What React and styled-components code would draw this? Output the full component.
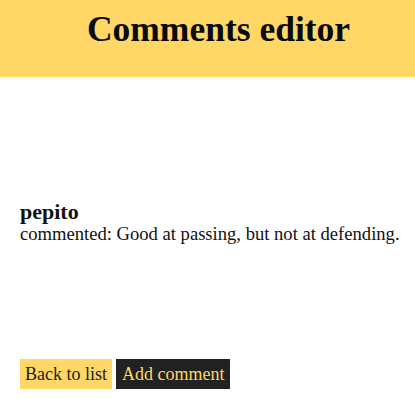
import styled, { createGlobalStyle } from "styled-components";

const GlobalStyle = createGlobalStyle`
  body {
    margin: 0;
    background: #ffffff;
    font-family: "Liberation Serif", "DejaVu Serif", serif;
    color: #111111;
  }
`;

const Header = styled.header`
  height: 77px;
  background-color: #fed766;
  display: flex;
  justify-content: center;
  padding-left: 22px;
`;

const Title = styled.h1`
  margin: 0;
  padding-top: 9px;
  font-size: 35.5px;
  font-weight: 700;
  line-height: 40px;
  color: #0a0a0a;
`;

const Main = styled.main`
  padding: 124px 0 0 20px;
`;

const Author = styled.div`
  font-size: 22px;
  font-weight: 700;
  line-height: 22px;
`;

const CommentText = styled.p`
  margin: 0;
  font-size: 18.6px;
  line-height: 22px;
  white-space: nowrap;
`;

const Actions = styled.div`
  display: flex;
  gap: 4px;
  margin-top: 114px;
`;

// dark prop switches to the black button
const Button = styled.button`
  height: 30px;
  padding: 0 ${(p) => (p.dark ? "6px" : "5px")};
  border: 0;
  border-radius: 0;
  font-family: inherit;
  font-size: 18px;
  background-color: ${(p) => (p.dark ? "#222222" : "#fed766")};
  color: ${(p) => (p.dark ? "#fed766" : "#222222")};
  cursor: pointer;
`;

const App = () => {
  return (
    <>
      <GlobalStyle />
      <Header>
        <Title>Comments editor</Title>
      </Header>
      <Main>
        <Author>pepito</Author>
        <CommentText>commented: Good at passing, but not at defending.</CommentText>
        <Actions>
          <Button>Back to list</Button>
          <Button dark>Add comment</Button>
        </Actions>
      </Main>
    </>
  );
};

export default App;
